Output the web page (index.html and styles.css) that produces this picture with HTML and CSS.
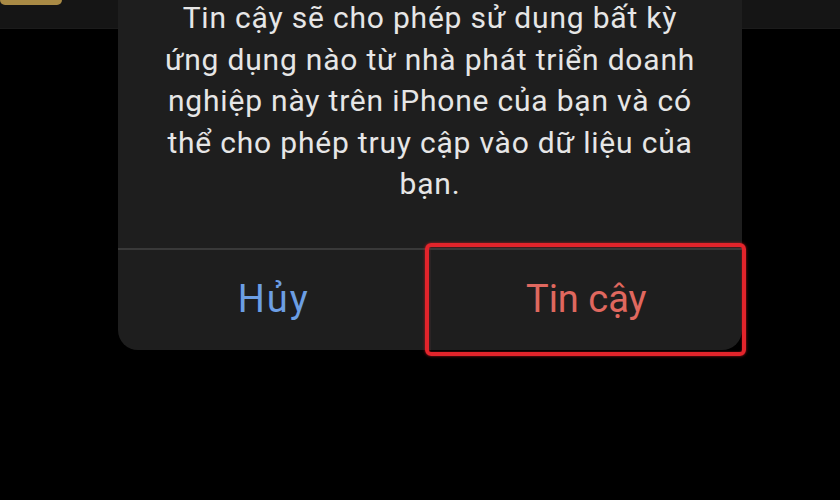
FILE: index.html
```html
<!DOCTYPE html>
<html lang="vi">
<head>
<meta charset="utf-8">
<link rel="stylesheet" href="styles.css">
</head>
<body>
<div class="screen">
  <div class="topstrip">
    <div class="appicon"></div>
  </div>
  <div class="alert">
    <p class="message">Tin cậy sẽ cho phép sử dụng bất kỳ<br>ứng dụng nào từ nhà phát triển doanh<br>nghiệp này trên iPhone của bạn và có<br>thể cho phép truy cập vào dữ liệu của<br>bạn.</p>
    <div class="actions">
      <div class="btn cancel">Hủy</div>
      <div class="btn trust">Tin cậy<span class="highlight"></span></div>
    </div>
  </div>
</div>
</body>
</html>
```

FILE: styles.css
```css
html, body {
  margin: 0;
  padding: 0;
  background: #000;
}
.screen {
  width: 840px;
  height: 500px;
  overflow: hidden;
  background: #000;
  font-family: Roboto, "Liberation Sans", sans-serif;
}
.topstrip {
  height: 28px;
  background: #151515;
  border-bottom: 1px solid #1b1b1b;
}
.appicon {
  width: 62px;
  height: 5px;
  background: #a98a45;
  border-radius: 0 0 8px 8px;
}
.alert {
  margin: -29px 0 0 118px;
  width: 624px;
  height: 350px;
  background: #1e1e1e;
  border-radius: 0 0 20px 20px;
  display: flex;
  flex-direction: column;
}
.message {
  margin: -3px 0 0 0;
  color: #e6e6e6;
  font-size: 30px;
  letter-spacing: 0.8px;
  line-height: 41.5px;
  text-align: center;
  height: 253px;
  box-sizing: border-box;
  border-bottom: 2px solid #393939;
}
.actions {
  flex: 1;
  display: flex;
}
.btn {
  flex: 1;
  display: flex;
  align-items: center;
  justify-content: center;
  font-size: 38px;
  padding-bottom: 2px;
  position: relative;
}
.cancel {
  color: #6c9ee4;
  letter-spacing: 2px;
  border-right: 1px solid #262626;
}
.trust {
  color: #e0685f;
}
.highlight {
  position: absolute;
  top: -7px;
  left: -6px;
  right: -4px;
  bottom: -6px;
  border: 4px solid #e3242b;
  border-radius: 6px;
  box-shadow: 0 0 3px rgba(230, 30, 40, 0.7), inset 0 0 2px rgba(230, 30, 40, 0.6);
}
```
